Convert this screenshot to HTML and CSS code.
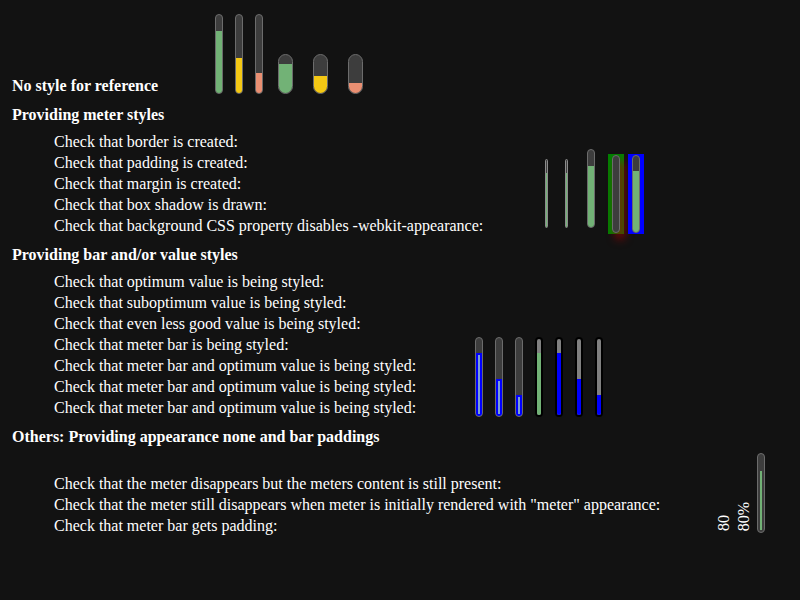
FILE: index.html
```html
<!DOCTYPE html>
<html lang="en">
<head>
    <meta charset="UTF-8">
    <title>Vertical meter styles</title>
    <link rel="stylesheet" href="styles.css">
</head>
<body>

    <div class="reference">
        <h3 class="ref-title">No style for reference</h3>
        <div class="meter tall"><div class="fill good" style="height: 80%"></div></div>
        <div class="meter tall"><div class="fill ok" style="height: 45%"></div></div>
        <div class="meter tall"><div class="fill bad" style="height: 26%"></div></div>
        <div class="meter short first-short"><div class="fill good" style="height: 76%"></div></div>
        <div class="meter short"><div class="fill ok" style="height: 45%"></div></div>
        <div class="meter short"><div class="fill bad" style="height: 26%"></div></div>
    </div>

    <h3 class="heading">Providing meter styles</h3>
    <div class="case">
        <div class="labels">
            <p>Check that border is created:</p>
            <p>Check that padding is created:</p>
            <p>Check that margin is created:</p>
            <p>Check that box shadow is drawn:</p>
            <p>Check that background CSS property disables -webkit-appearance:</p>
        </div>
        <div class="meters styles-row">
            <div class="meter thin m-border"><div class="fill good" style="height: 80%"></div></div>
            <div class="meter thin m-padding"><div class="fill good" style="height: 80%"></div></div>
            <div class="meter tall m-margin"><div class="fill good" style="height: 79%"></div></div>
            <div class="frame green-frame">
                <div class="meter framed shadowed"></div>
            </div>
            <div class="frame blue-frame">
                <div class="meter framed"><div class="fill good" style="height: 80%"></div></div>
            </div>
        </div>
    </div>

    <h3 class="heading">Providing bar and/or value styles</h3>
    <div class="case">
        <div class="labels">
            <p>Check that optimum value is being styled:</p>
            <p>Check that suboptimum value is being styled:</p>
            <p>Check that even less good value is being styled:</p>
            <p>Check that meter bar is being styled:</p>
            <p>Check that meter bar and optimum value is being styled:</p>
            <p>Check that meter bar and optimum value is being styled:</p>
            <p>Check that meter bar and optimum value is being styled:</p>
        </div>
        <div class="meters bar-row">
            <div class="meter tall"><div class="fill styled" style="height: 81%"></div></div>
            <div class="meter tall"><div class="fill styled" style="height: 47%"></div></div>
            <div class="meter tall"><div class="fill styled" style="height: 27%"></div></div>
            <div class="meter tall black-bar"><div class="fill good" style="height: 82%"></div></div>
            <div class="meter tall black-bar"><div class="fill blue" style="height: 82%"></div></div>
            <div class="meter tall black-bar"><div class="fill blue" style="height: 47%"></div></div>
            <div class="meter tall black-bar"><div class="fill blue" style="height: 26%"></div></div>
        </div>
    </div>

    <h3 class="heading">Others: Providing appearance none and bar paddings</h3>
    <div class="case">
        <div class="labels spaced">
            <p>Check that the meter disappears but the meters content is still present:</p>
            <p>Check that the meter still disappears when meter is initially rendered with "meter" appearance:</p>
            <p>Check that meter bar gets padding:</p>
        </div>
        <div class="meters others-row">
            <span class="sideways">80</span>
            <span class="sideways">80%</span>
            <div class="meter tall padded"><div class="bar" style="height: 80%"></div></div>
        </div>
    </div>

</body>
</html>
```

FILE: styles.css
```css
body {
    margin: 0;
    padding: 0 12px;
    background: #121212;
    color: #fff;
    font-family: "Liberation Serif", "Times New Roman", serif;
    font-size: 16px;
    line-height: 21px;
}
h3 {
    font-size: 16px;
    font-weight: bold;
    line-height: 21px;
}
p {
    margin: 0;
}

/* first row: title + plain meters */
.reference {
    display: flex;
    align-items: flex-end;
    padding-top: 14px;
}
.ref-title {
    width: 203px;
    margin: 0;
}
.reference .meter {
    margin-bottom: 2px;
}
.reference .tall + .tall {
    margin-left: 12px;
}
.reference .first-short {
    margin-left: 15px;
}
.reference .short + .short {
    margin-left: 20px;
}

.heading {
    margin: 8px 0 6px;
}
.case {
    display: flex;
    align-items: flex-end;
}
.labels {
    padding-left: 42px;
}
.labels.spaced {
    padding-top: 18px;
}
.meters {
    display: flex;
    align-items: flex-end;
    margin-left: 59px;
}

/* meter shape */
.meter {
    display: flex;
    flex-direction: column;
    justify-content: flex-end;
    box-sizing: border-box;
    width: 8px;
    height: 80px;
    border: 1px solid #6c6c6c;
    border-radius: 4px;
    background: #3d3d3d;
    overflow: hidden;
}
.meter.short {
    width: 15px;
    height: 40px;
    border-radius: 8px;
}
.meter.thin {
    width: 3px;
    height: 69px;
    border-color: #8c8c8c;
    border-radius: 2px;
}
.meter.framed {
    height: 78px;
    margin: 1px 4px;
}
.fill.good { background: #72b276; }
.fill.ok { background: #f4c814; }
.fill.bad { background: #ea8f72; }
.fill.blue { background: #0000ff; }
.fill.styled {
    box-sizing: border-box;
    background: #7b9fd4;
    border: 2px solid #0000ff;
}

/* providing meter styles */
.styles-row .m-border {
    margin-left: 3px;
    margin-bottom: 8px;
}
.styles-row .m-padding {
    margin-left: 17px;
    margin-bottom: 8px;
}
.styles-row .m-margin {
    margin-left: 19px;
    margin-bottom: 8px;
    height: 79px;
}
.frame {
    display: flex;
    margin-bottom: 2px;
}
.green-frame {
    background: #008000;
    margin-left: 13px;
}
.blue-frame {
    background: #0000ff;
    margin-left: 4px;
}
.shadowed {
    box-shadow: 4px 6px 10px rgba(170, 0, 0, 0.85);
    overflow: visible;
}

/* bar and value styles */
.bar-row .meter {
    margin-bottom: 1px;
}
.bar-row .meter + .meter {
    margin-left: 12px;
}
.meter.black-bar {
    border: 2px solid #000;
    background: #808080;
}

/* others */
.others-row {
    margin-left: 57px;
    margin-bottom: 3px;
}
.sideways {
    writing-mode: vertical-rl;
    transform: rotate(180deg);
    line-height: 13px;
    margin-right: 7px;
    margin-bottom: 2px;
}
.meter.padded {
    padding: 2px;
    align-items: flex-start;
}
.bar {
    width: 2px;
    background: #72b276;
}
```
